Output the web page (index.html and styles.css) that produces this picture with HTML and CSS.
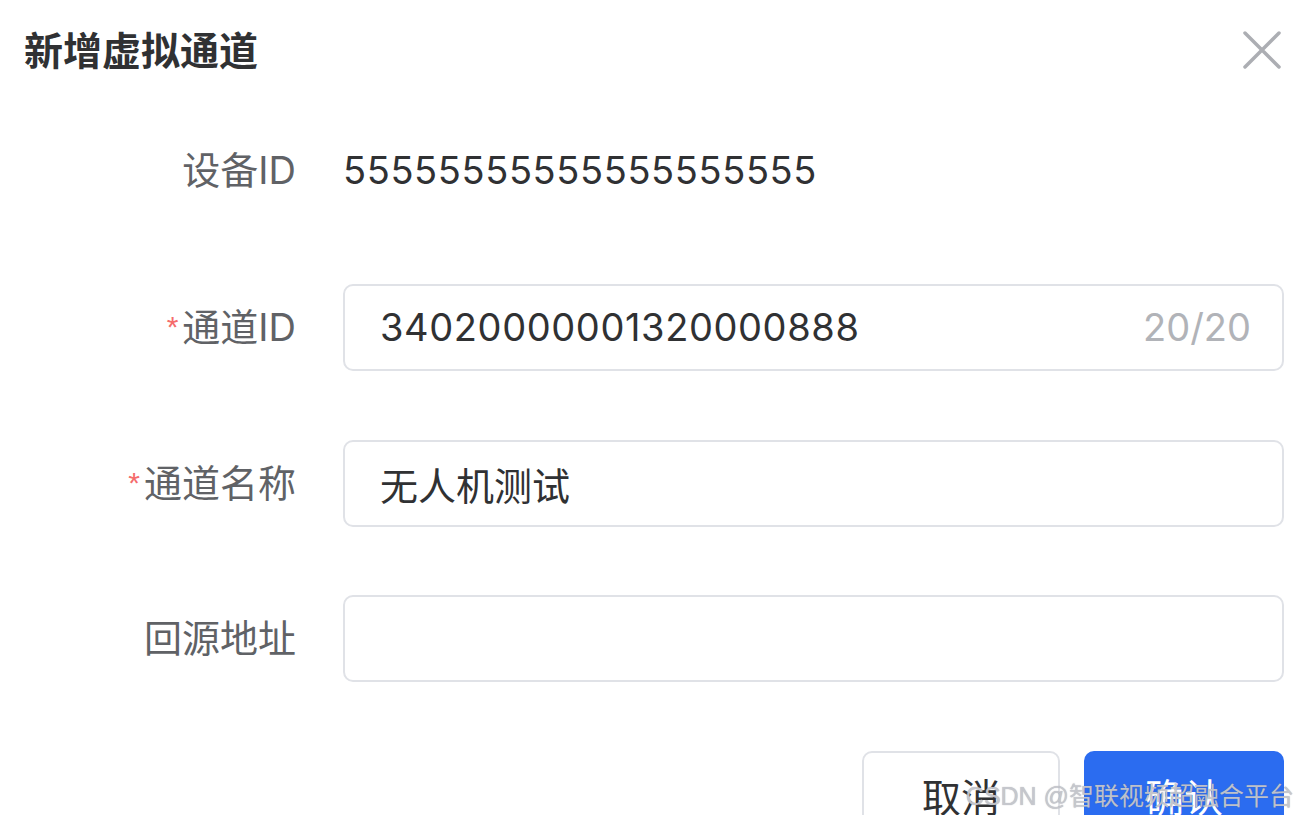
FILE: index.html
```html
<!DOCTYPE html>
<html lang="zh-CN">
<head>
<meta charset="utf-8">
<title>新增虚拟通道</title>
<link rel="stylesheet" href="styles.css">
</head>
<body>
<div class="dialog">
  <div class="header">
    <div class="title">新增虚拟通道</div>
    <button class="close" aria-label="关闭">
      <svg width="38" height="38" viewBox="0 0 38 38"><path d="M2 2 L36 36 M36 2 L2 36" stroke="#acaeb3" stroke-width="3.5" stroke-linecap="round" fill="none"/></svg>
    </button>
  </div>
  <div class="form">
    <div class="row">
      <div class="label">设备ID</div>
      <div class="value num">55555555555555555555</div>
    </div>
    <div class="row">
      <div class="label"><span class="req">*</span>通道ID</div>
      <div class="input"><span class="text num">34020000001320000888</span><span class="count">20/20</span></div>
    </div>
    <div class="row">
      <div class="label"><span class="req">*</span>通道名称</div>
      <div class="input"><span class="text">无人机测试</span></div>
    </div>
    <div class="row">
      <div class="label">回源地址</div>
      <div class="input"><span class="text"></span></div>
    </div>
  </div>
  <div class="footer">
    <button class="btn">取消</button>
    <button class="btn primary">确认</button>
  </div>
  <div class="watermark">CSDN @智联视频超融合平台</div>
</div>
</body>
</html>
```
FILE: styles.css
```css
html, body {
  margin: 0;
  padding: 0;
  background: #ffffff;
}
body {
  font-family: Inter, "Noto Sans CJK SC", sans-serif;
  overflow: hidden;
}
.dialog {
  position: relative;
  width: 1299px;
  height: 815px;
  overflow: hidden;
}
.header {
  height: 100px;
  display: flex;
  align-items: center;
  justify-content: space-between;
  padding: 0 18px 0 24px;
  margin-bottom: 27px;
}
.title {
  font-size: 39px;
  font-weight: 600;
  color: #303133;
  line-height: 1;
}
.close {
  border: 0;
  background: transparent;
  padding: 0;
  width: 38px;
  height: 38px;
  display: flex;
}
.form {
  display: flex;
  flex-direction: column;
  gap: 69px;
  padding-right: 15px;
}
.row {
  display: grid;
  grid-template-columns: 296px 1fr;
  column-gap: 47px;
  height: 87px;
  align-items: center;
}
.label {
  text-align: right;
  font-size: 38px;
  color: #606266;
  line-height: 87px;
  white-space: nowrap;
}
.req {
  font-family: "Liberation Sans", sans-serif;
  font-size: 30px;
  color: #f56c6c;
  margin-right: 4px;
  vertical-align: 4px;
}
.value {
  font-size: 38px;
  color: #303133;
  line-height: 87px;
}
.num {
  letter-spacing: 0.6px;
}
.input {
  box-sizing: border-box;
  height: 87px;
  border: 2px solid #e0e2e7;
  border-radius: 10px;
  display: flex;
  align-items: center;
  justify-content: space-between;
  padding: 0 31px 0 35px;
  font-size: 38px;
}
.text {
  color: #303133;
}
.count {
  color: #b1b3b8;
}
.footer {
  display: flex;
  justify-content: flex-end;
  gap: 24px;
  margin-top: 69px;
  padding-right: 15px;
}
.btn {
  box-sizing: border-box;
  width: 198px;
  height: 88px;
  border: 2px solid #e0e2e7;
  border-radius: 10px;
  background: #ffffff;
  font-family: Inter, "Noto Sans CJK SC", sans-serif;
  font-size: 39px;
  color: #303133;
  padding: 0;
}
.btn.primary {
  width: 200px;
  background: #2b6cf0;
  border-color: #2b6cf0;
  color: #ffffff;
}
.watermark {
  position: absolute;
  right: 5px;
  top: 776px;
  font-family: "Liberation Sans", "Noto Sans CJK SC", sans-serif;
  font-size: 25px;
  color: rgba(200, 202, 208, 0.92);
  text-shadow: 0 0 1px rgba(110, 110, 120, 0.6);
  white-space: nowrap;
}
```
